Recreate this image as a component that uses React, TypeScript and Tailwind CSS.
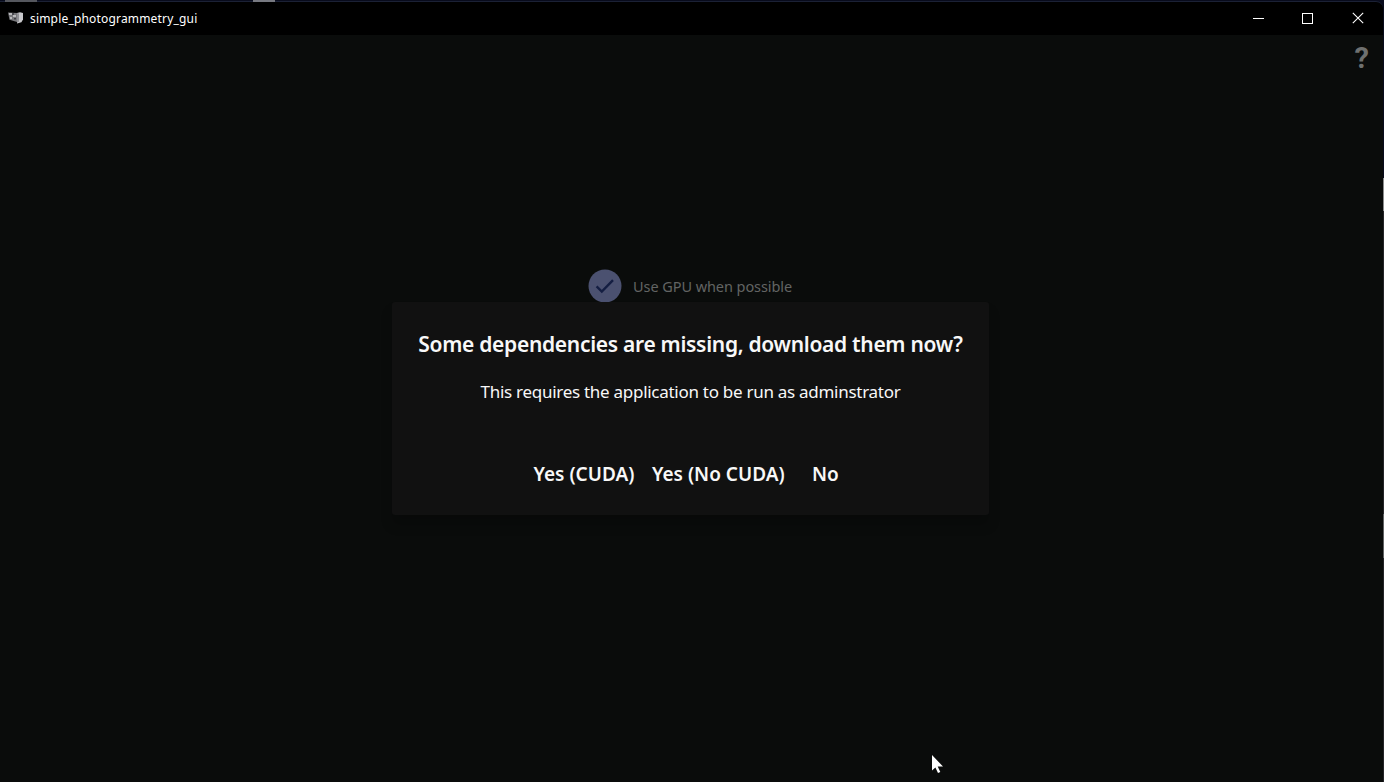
import React from "react";

function TitleBar() {
  return (
    <header className="flex h-[34px] shrink-0 items-center justify-between rounded-tr-[7px] border-t border-[#1b2135] bg-black text-white">
      <div className="flex items-center">
        <svg className="mb-px ml-2 h-4 w-4" viewBox="0 0 16 16">
          <path d="M0 2.5 9 3v9L1.5 9.8z" fill="#77777b" />
          <path d="M1 3h3v2H1zM5 5h3v2H5zM2 7h2v2H2z" fill="#b9b9bb" />
          <path d="M4 3.2h2v1.5H4zM6 8h2v1.5H6z" fill="#3d3d42" />
          <path d="m9 3 3-.7 3 .8v6.4l-1.6 2.8L9 13.5z" fill="#c8c8cb" />
          <path d="m9 3 2 .5v8L9 13z" fill="#8f8f94" />
        </svg>
        <h1 className="ml-[6px] text-[12px] leading-4 tracking-[0.18px]">simple_photogrammetry_gui</h1>
      </div>
      <div className="flex pb-px">
        <button aria-label="Minimize" className="flex h-8 w-[49px] items-center justify-center">
          <svg width="13" height="13" viewBox="0 0 13 13"><path d="M1 6.5h11" stroke="white" shapeRendering="crispEdges" /></svg>
        </button>
        <button aria-label="Maximize" className="flex h-8 w-[49px] items-center justify-center">
          <svg width="13" height="13" viewBox="0 0 13 13"><rect x="1.5" y="1.5" width="10" height="10" fill="none" stroke="white" /></svg>
        </button>
        <button aria-label="Close" className="flex h-8 w-[51px] items-center justify-center">
          <svg width="12" height="12" viewBox="0 0 12 12"><path d="m.8.8 10.4 10.4M11.2.8.8 11.2" stroke="white" strokeWidth="1.1" /></svg>
        </button>
      </div>
    </header>
  );
}

function DependencyDialog() {
  return (
    <section role="dialog" className="absolute top-[267px] left-[392px] flex h-[213px] w-[597px] flex-col items-center rounded-[3px] bg-[#111111] whitespace-nowrap text-[#f8f8f8] shadow-[0_10px_12px_0px_rgba(0,0,0,0.2)]">
      <h2 className="mt-[28px] text-[21px] leading-7 font-semibold tracking-[-0.3px]">Some dependencies are missing, download them now?</h2>
      <p className="mt-[22px] text-[17px] leading-6 tracking-[-0.28px]">This requires the application to be run as adminstrator</p>
      <div className="mt-[56px] flex w-full pl-[141.5px] text-[19px] leading-7 font-semibold">
        <button className="w-[118.5px] text-left">Yes (CUDA)</button>
        <button className="w-[160px] text-left">Yes (No CUDA)</button>
        <button className="text-left">No</button>
      </div>
    </section>
  );
}

export default function App() {
  return (
    <div className="relative flex h-[782px] w-[1384px] flex-col overflow-hidden bg-[#080b1c] pt-px pr-px font-['Noto_Sans',sans-serif]">
      <div className="absolute top-0 left-[5px] h-0.5 w-8 bg-[#55575e]" />
      <div className="absolute top-0 left-[253px] h-0.5 w-[22px] bg-[#777981]" />
      <TitleBar />
      <main className="relative flex flex-1 flex-col items-center bg-[#0a0c0b]">
        <div className="mt-[10px] flex h-6 w-full justify-end pr-[14px] text-[#6e706f]">
          <span className="font-['Roboto',sans-serif] text-[29px] leading-[26px] font-bold">?</span>
        </div>
        <label className="mt-[200px] flex h-[33px] w-[207px] items-center whitespace-nowrap">
          <svg width="34" height="34" viewBox="0 0 34 34">
            <circle cx="17" cy="17" r="16.5" fill="#4b5170" />
            <path d="m8.6 17.4 5.2 5.1L25 11.2" fill="none" stroke="#141e42" strokeWidth="2.4" />
          </svg>
          <span className="ml-[11px] text-[14.5px] leading-5 tracking-[-0.07px] text-[#626463]">Use GPU when possible</span>
        </label>
        <DependencyDialog />
      </main>
      <div className="absolute top-[178px] right-0 h-[33px] w-px bg-[#8b8c8d]" />
      <div className="absolute top-[211px] right-0 h-[571px] w-px bg-[#242428]" />
      <div className="absolute top-[514px] right-0 h-[44px] w-px bg-[#606264]" />
      <svg className="absolute top-[754px] left-[931px]" width="13" height="20" viewBox="0 0 13 20">
        <path d="M1 1v15.5l3.4-3.1L7 19l2.3-1-2.6-5.5H12z" fill="white" />
      </svg>
    </div>
  );
}
